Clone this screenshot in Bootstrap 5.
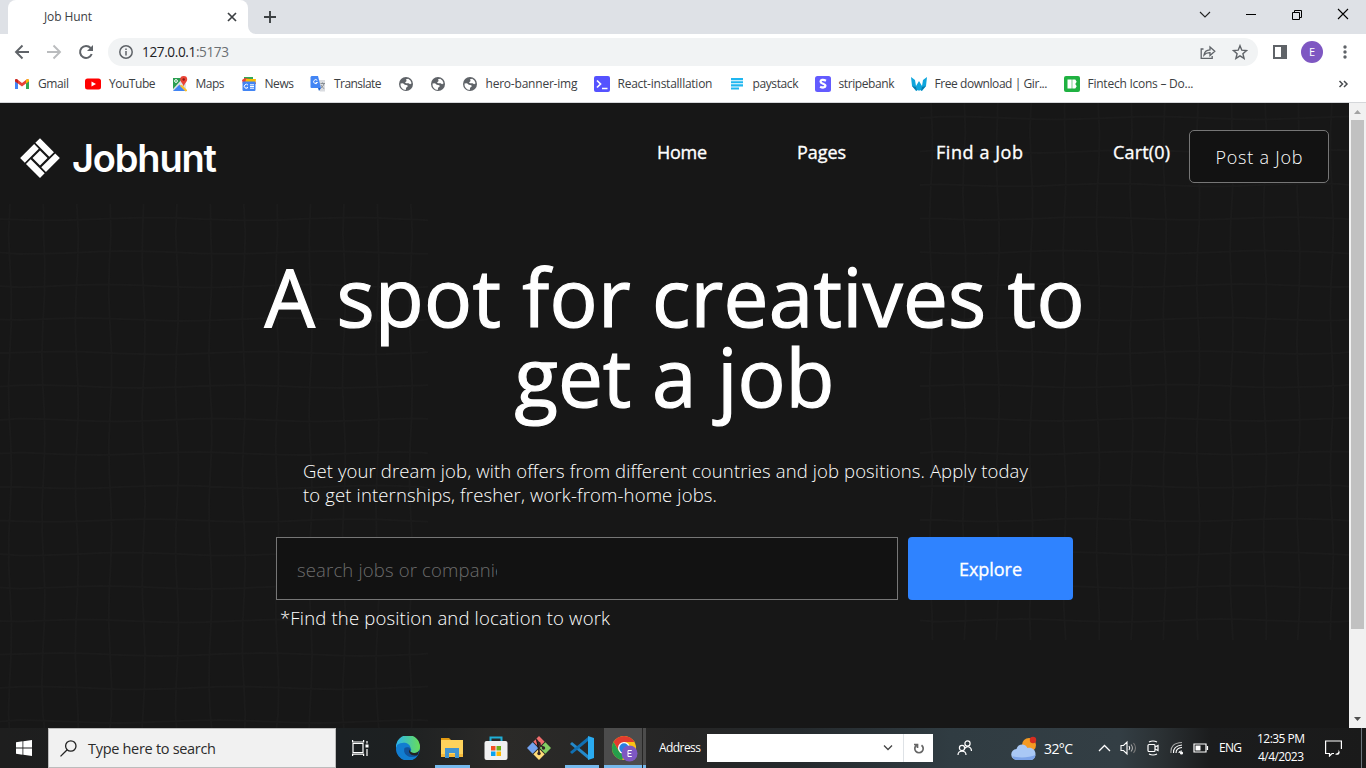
<!DOCTYPE html>
<html lang="en">
<head>
<meta charset="utf-8">
<title>Job Hunt</title>
<meta name="viewport" content="width=device-width, initial-scale=1">
<link href="https://cdn.jsdelivr.net/npm/bootstrap@5.3.0/dist/css/bootstrap.min.css" rel="stylesheet">
<style>
  html, body { height: 768px; overflow: hidden; }
  body { font-family: "Open Sans", "Noto Sans", sans-serif; font-size: 12px; color: #3c4043; }
  svg { display: block; flex: none; }
  [data-w] { display: inline-block; white-space: nowrap; flex: none; }

  .tabstrip { height: 34px; background: #dee1e6; }
  .tab-active { width: 248px; height: 34px; }
  .tab-face { margin-left: 8px; width: 240px; background: #fff; border-radius: 8px 8px 0 0; padding: 0 10px 0 36px; }
  .toolbar { height: 36px; background: #fff; }
  .omnibox { width: 1150px; height: 28px; border-radius: 14px; background: #f1f3f4; margin-left: 13px; padding: 0 10px 0 11px; font-size: 13.6px; color: #202124; }
  .bookmarks { height: 32px; gap: 16px; padding: 0 17px 5px 14px; background: #fff; }
  .bookmarks > span { display: flex; align-items: center; gap: 8px; }
  .avatar { width: 22px; height: 22px; background: #7e57c2; color: #fff; font-size: 11px; }

  .site { height: 626px; border-top: 1px solid #d5d7da; background: #171717; }
  .site-page { font-size: 18.5px; color: #fff; font-weight: 320; }
  .grid-art { fill: none; stroke: #1b1b1b; stroke-width: 2; }
  .site-header { height: 101px; padding: 27px 20px 0; }
  .logo-text { font: 560 38px/40px Inter, sans-serif; }
  .site-nav { gap: 90px; font-size: 18px; font-weight: 500; line-height: 24px; padding-top: 10px; margin-right: 19px; -webkit-text-stroke: .35px #fff; }
  .post-btn { width: 140px; height: 53px; border: 1px solid #767676; border-radius: 5px; background: #121212; font-size: 18px; padding-top: 1px; }
  .hero-title { font-size: 80px; line-height: 80px; font-weight: 400; margin: 52px 0 0; -webkit-text-stroke: 1.2px #fff; }
  .hero-copy { line-height: 24px; margin: 43px 0 0 303px; }
  .search-row { margin: 30px 0 0 276px; gap: 10px; }
  .search-box { width: 622px; height: 63px; background: #121212; border: 1px solid #767676; padding: 2px 0 0 20px; color: #6c6c6c; font-weight: 300; }
  .search-clip { width: 200px; overflow: hidden; }
  .explore-btn { width: 165px; height: 63px; padding-top: 1px; border-radius: 4px; background: #2f83ff; font-size: 18px; font-weight: 500; -webkit-text-stroke: .35px #fff; }
  .hint { margin: 6px 0 0 280px; line-height: 24px; }
  .scrollbar { width: 17px; background: #f1f1f1; }
  .scroll-thumb { width: 13px; height: 509px; background: #c1c1c1; }

  .taskbar { height: 40px; color: #fff; background: linear-gradient(90deg, #1e1e1e 0, #1c2022 340px, #1d2021 395px, #2b2a28 500px, #252525 690px, #252a2d 800px, #303c42 950px, #333e44 1120px, #2b3134 1160px, #1b1c1d 1210px, #1a1a1a 1366px); }
  .win-search { width: 288px; height: 40px; background: #f1f1f1; border: 1px solid #bcbcbc; color: #2b2b2b; font-size: 14.5px; padding-left: 11px; }
  .cell { display: flex; flex: none; align-items: center; justify-content: center; height: 40px; }
  .app-open { border-bottom: 3px solid #76b9ed; }
  .app-active { background: #4c4c4c; }
  .addr { width: 226px; height: 28px; background: #fff; }
  .clock { font-size: 12px; line-height: 18px; }
</style>
</head>
<body>
<svg width="0" height="0" class="position-absolute" aria-hidden="true">
  <symbol id="globe" viewBox="0 0 16 16"><circle cx="8" cy="8" r="7" fill="#5f6368"/><path d="M2.500 7.500 5 7.200l1.800 1.600 2.600.4.300 1.300-1.600 1.200-.3 2.400A5.800 5.800 0 0 1 2.500 7.500zM8 3.200l2.200-.4 2.200 1.800 1.200 2.600-1.500 1-1.500-1-2.400.1L7 6.500l1.600-1.400z" fill="#fff"/></symbol>
  <symbol id="chrome" viewBox="0 0 28 28"><circle cx="14" cy="14" r="13" fill="#fbc116"/><path d="M2.800 7.500A13 13 0 0 1 25.200 7.500H14L8.400 17.200z" fill="#e33b2e"/><path d="M2.800 7.500 8.400 17.200 14 20.500l-2 6.400A13 13 0 0 1 2.800 7.500z" fill="#269f4b"/><circle cx="14" cy="14" r="6.500" fill="#fff"/><circle cx="14" cy="14" r="5.100" fill="#2a7de1"/></symbol>
</svg>

<div class="d-flex flex-column">
  <!-- window tabs -->
  <div class="tabstrip d-flex align-items-center">
    <div class="tab-active d-flex">
      <div class="tab-face d-flex align-items-center justify-content-between">
        <span data-w="48">Job Hunt</span>
        <svg width="12" height="12" viewBox="0 0 12 12" stroke="#3c4043" stroke-width="1.700"><path d="m2 2 8 8M10 2l-8 8"/></svg>
      </div>
    </div>
    <svg class="align-self-end" width="8" height="8"><path d="M0 0A8 8 0 0 0 8 8H0z" fill="#fff"/></svg>
    <svg width="14" height="14" style="margin-left:7px" viewBox="0 0 14 14" stroke="#3c4043" stroke-width="1.900"><path d="M7 1v12M1 7h12"/></svg>
    <div class="ms-auto d-flex align-items-center pb-1" style="margin-right:6px">
      <svg width="46" height="14" viewBox="0 0 46 14" fill="none" stroke="#222" stroke-width="1.100"><path d="m13 4 5 5 5-5"/></svg>
      <svg width="46" height="14" viewBox="0 0 46 14" stroke="#000"><path d="M13 6.500h10"/></svg>
      <svg width="46" height="14" viewBox="0 0 46 14" fill="none" stroke="#000"><path d="M13.500 4.500h7v7h-7zM15.500 4.500v-2h7v7h-2"/></svg>
      <svg width="35" height="14" viewBox="0 0 35 14" stroke="#000" stroke-width="1.100"><path d="m13 1 10 10m0-10L13 11"/></svg>
    </div>
  </div>

  <!-- address bar -->
  <div class="toolbar d-flex align-items-center">
    <svg width="18" height="18" style="margin-left:13px" viewBox="0 0 18 18" fill="none" stroke="#5f6368" stroke-width="1.900"><path d="M16 9H3m6.500-6.500L3 9l6.500 6.500"/></svg>
    <svg width="18" height="18" style="margin-left:14px" viewBox="0 0 18 18" fill="none" stroke="#babcbe" stroke-width="1.900"><path d="M2 9h13M8.500 2.500 15 9l-6.500 6.500"/></svg>
    <svg width="18" height="18" style="margin-left:14px" viewBox="0 0 18 18" fill="none" stroke="#5f6368" stroke-width="2"><path d="M14.700 11A6 6 0 1 1 13.600 5"/><path d="M16 2v6h-6z" fill="#5f6368" stroke="none"/></svg>
    <div class="omnibox d-flex align-items-center">
      <svg width="14" height="14" viewBox="0 0 14 14" fill="none" stroke="#5f6368" stroke-width="1.500"><circle cx="7" cy="7" r="6.200"/><path d="M7 6v4.500M7 3.400v1.500"/></svg>
      <span style="margin-left:9px" data-w="87">127.0.0.1<span style="color:#6a6e72">:5173</span></span>
      <svg class="ms-auto" width="16" height="16" viewBox="0 0 16 16" fill="none" stroke="#5f6368" stroke-width="1.300"><path d="M3.500 5H1.200v9.300h11V12M4 11c.4-3.500 2.500-5 6-5.200V3l4.800 4.300L10 11.500V8.700C7.500 8.600 5.500 9.300 4 11z"/></svg>
      <svg style="margin-left:16px" width="16" height="16" viewBox="0 0 16 16" fill="none" stroke="#5f6368" stroke-width="1.400"><path d="m8 1.700 1.800 4.500 4.700.4-3.600 3.100 1.200 4.700L8 11.800l-4.100 2.600 1.200-4.700L1.500 6.600l4.700-.4z"/></svg>
    </div>
    <svg width="14" height="14" style="margin-left:15px" viewBox="0 0 14 14"><path d="M1 1h12v12H1z" fill="none" stroke="#5f6368" stroke-width="2"/><path d="M8 1h5v12H8z" fill="#5f6368"/></svg>
    <div class="avatar rounded-circle d-flex align-items-center justify-content-center" style="margin-left:14px">E</div>
    <svg width="4" height="14" style="margin-left:20px" fill="#5f6368"><circle cx="2" cy="2" r="1.700"/><circle cx="2" cy="7" r="1.700"/><circle cx="2" cy="12" r="1.700"/></svg>
  </div>

  <!-- bookmarks -->
  <div class="bookmarks d-flex align-items-center">
    <span><svg width="16" height="16" viewBox="0 0 16 16"><path d="M1 4v9h3V6.500z" fill="#4285f4"/><path d="M15 4v9h-3V6.500z" fill="#34a853"/><path d="M1 3.800 2.800 3 8 7l5.200-4 1.800.8v1.400L8 10.500 1 5.200z" fill="#ea4335"/><path d="M12 4v3.500l3-2.300V3.800L13.700 3z" fill="#fbbc04"/><path d="M1 3.500v1.700l3 2.300V4l-1.500-1z" fill="#c5221f"/></svg><b class="fw-normal" data-w="31">Gmail</b></span>
    <span><svg width="16" height="16"><rect y="2.500" width="16" height="11" rx="2.500" fill="#f00"/><path d="m6.500 5.500 4.500 2.500-4.500 2.500z" fill="#fff"/></svg><b class="fw-normal" data-w="46.500">YouTube</b></span>
    <span><svg width="16" height="16" viewBox="0 0 16 16"><path d="M1 2h13v13H1z" fill="#dfe3e6"/><path d="M1 2h10L1 13z" fill="#2b9e51"/><path d="m7.500 8.500 6.500 6.500H1z" fill="#4285f4"/><path d="m10 9 5 5v1l-1.500.5-6-6z" fill="#fbc02d"/><path d="M11.700 0a3.500 3.500 0 0 1 3.500 3.600c0 2.400-2.400 3.400-3.500 7-1.100-3.600-3.500-4.600-3.500-7A3.500 3.500 0 0 1 11.700 0z" fill="#ea4335"/><circle cx="11.700" cy="3.500" r="1.200" fill="#8e1a13"/><circle cx="4" cy="5" r="1.400" fill="none" stroke="#fff"/></svg><b class="fw-normal" data-w="29">Maps</b></span>
    <span><svg width="16" height="16" viewBox="0 0 16 16"><path d="M3 1h9v6H3z" fill="#34a853"/><path d="m1 4 3-2 10 2 1 4H2z" fill="#ea4335"/><path d="m5 3 10 0-1 5H4z" fill="#fbbc04"/><rect x="1.500" y="5.500" width="13" height="9.500" rx="1" fill="#4285f4"/><path d="M7 9.200a2 2 0 1 0 0 2.200H5.500M9 8.800h4m-4 1.700h4m-4 1.700h4" stroke="#fff" fill="none"/></svg><b class="fw-normal" data-w="29.500">News</b></span>
    <span><svg width="16" height="16" viewBox="0 0 16 16"><path d="M6 4h9v11.500h-5z" fill="#dadce0"/><path d="M1.500 0H8l3 12H1.500A1 1 0 0 1 .5 11V1z" fill="#4285f4"/><path d="m8 12 3 0-2 3z" fill="#1b5fcc"/><path d="M7.300 4.500a2 2 0 1 0 .2 2H5.700" stroke="#fff" fill="none"/><path d="M10.500 7.500H15m-2.500-1v1m1.500 0c-.5 2.500-2 3.500-3 4.500m0-3c1 2 2 3 3.200 3.500" stroke="#80868b" fill="none" stroke-width=".9"/></svg><b class="fw-normal" data-w="47.500">Translate</b></span>
    <span><svg width="16" height="16"><use href="#globe"/></svg></span>
    <span><svg width="16" height="16"><use href="#globe"/></svg></span>
    <span><svg width="16" height="16"><use href="#globe"/></svg><b class="fw-normal" data-w="92">hero-banner-img</b></span>
    <span><svg width="16" height="16"><rect width="16" height="16" rx="2" fill="#5552ff"/><path d="m3 4.500 3.500 3.500L3 11.500M8 12.500h5.500" fill="none" stroke="#fff" stroke-width="1.700"/></svg><b class="fw-normal" data-w="95">React-installlation</b></span>
    <span><svg width="16" height="16" fill="#1fb6f0"><path d="M2 2h12v2.200H2zM2 5.200h12v2.100H2zM2 8.300h12v2.100H2zM2 11.400h8v2.200H2z"/></svg><b class="fw-normal" data-w="46">paystack</b></span>
    <span><svg width="16" height="16"><rect width="16" height="16" rx="2.500" fill="#635bff"/><path d="M11 4.800C8 3.200 5.500 3.900 5.600 5.700c.1 2.300 5 1.900 4.800 4.200-.1 1.900-3 2-5.300.8" fill="none" stroke="#fff" stroke-width="2.300"/></svg><b class="fw-normal" data-w="56">stripebank</b></span>
    <span><svg width="16" height="16"><path d="m0 1 4 3 1 6 3-5 3 5 1-6 4-3-1 9-4 5-2-1-1 1-1-1-2 1-4-5z" fill="#0ea5dc"/><path d="m1 10 4 1 1 4zM15 10l-4 1-1 4z" fill="#0878a8"/></svg><b class="fw-normal" data-w="113">Free download | Gir...</b></span>
    <span><svg width="16" height="16"><rect width="16" height="16" rx="2" fill="#1fb141"/><path d="M3.500 3.500h4.200v9H3.500zM8.300 3.500h3l1.400 2.200L11.300 8l1.400 2.300-1.400 2.200h-3z" fill="#fff"/></svg><b class="fw-normal" data-w="106">Fintech Icons – Do...</b></span>
    <svg class="ms-auto" width="11" height="10" fill="none" stroke="#4a4d51" stroke-width="1.500"><path d="m1.500 2 3 3-3 3M6 2l3 3-3 3"/></svg>
  </div>

  <!-- job site -->
  <div class="site d-flex">
    <main class="site-page flex-grow-1 position-relative overflow-hidden">
      <svg class="grid-art position-absolute top-0 start-0" width="1349" height="625"><path id="gridLines"/></svg>
      <div class="position-relative">
        <header class="site-header d-flex align-items-start">
          <svg width="40" height="40" viewBox="0 0 40 40" style="margin-top:8px" fill="#fff"><g transform="rotate(45 20 20)"><path d="M6 6h19.700v6.600H6zM27.500 6h6.600v19.700h-6.600zM14.300 27.500h19.800v6.600H14.300zM6 14.300h6.600v19.800H6zM14.700 14.700h10.600v10.600H14.700z"/></g></svg>
          <span class="logo-text" style="margin:8px 0 0 12px" data-w="145">Jobhunt</span>
          <nav class="site-nav d-flex ms-auto"><span data-w="50">Home</span><span data-w="49">Pages</span><span data-w="87">Find a Job</span><span data-w="57">Cart(0)</span></nav>
          <div class="post-btn d-flex align-items-center justify-content-center"><span data-w="87">Post a Job</span></div>
        </header>
        <h1 class="hero-title d-flex flex-column align-items-center"><span data-w="820">A spot for creatives to</span><span data-w="320">get a job</span></h1>
        <p class="hero-copy d-flex flex-column align-items-start"><span data-w="725">Get your dream job, with offers from different countries and job positions. Apply today</span><span data-w="414">to get internships, fresher, work-from-home jobs.</span></p>
        <div class="search-row d-flex">
          <div class="search-box d-flex align-items-center"><div class="search-clip"><span data-w="217">search jobs or companies</span></div></div>
          <div class="explore-btn d-flex align-items-center justify-content-center"><span data-w="63">Explore</span></div>
        </div>
        <p class="hint"><span data-w="330">*Find the position and location to work</span></p>
      </div>
    </main>
    <div class="scrollbar d-flex flex-column align-items-center">
      <svg width="17" height="17"><path d="m5 11 3.500-4 3.500 4z" fill="#a3a3a3"/></svg>
      <div class="scroll-thumb"></div>
      <svg class="mt-auto" width="17" height="17"><path d="m5 6 3.500 4L12 6z" fill="#505050"/></svg>
    </div>
  </div>

  <!-- taskbar -->
  <div class="taskbar d-flex align-items-center">
    <div class="cell" style="width:48px"><svg width="16" height="16" fill="#fff"><path d="M0 2.300 6.500 1.300v6.200H0zM7.300 1.200 16 0v7.500H7.300zM0 8.400h6.500v6.300L0 13.800zM7.300 8.400H16V16l-8.700-1.200z"/></svg></div>
    <div class="win-search d-flex align-items-center"><svg width="17" height="17" viewBox="0 0 17 17" fill="none" stroke="#222" stroke-width="1.300"><circle cx="10.800" cy="6" r="5.200"/><path d="M7.200 9.800.5 16.400"/></svg><span style="margin:1px 0 0 11px" data-w="128">Type here to search</span></div>
    <div class="cell" style="width:48px"><svg width="17" height="16" fill="none" stroke="#fff" stroke-width="1.200"><path d="M1 3.500h10v9H1zM.6 0v2h11V0M.6 16v-1.800h11V16M15 1v2.500M15 9v7"/><path d="M13.500 4.500h3v3h-3z" fill="#fff" stroke="none"/></svg></div>
    <div class="cell" style="width:48px"><svg width="24" height="24" viewBox="0 0 24 24"><defs><linearGradient id="eg" x2="1"><stop stop-color="#2bb4ef"/><stop offset="1" stop-color="#68dd58"/></linearGradient></defs><circle cx="12" cy="12" r="12" fill="#0b63b6"/><path d="M0 11A12 12 0 0 1 24 11c0 5-4 7-9 6-2-1 1-2 0-4C13 7 4 6 0 12z" fill="url(#eg)"/><path d="M1 9c6-4 13-2 13.500 3-4-2-7 2-5 5.500 3 5 9 3.500 13 1A12 12 0 0 1 0 13z" fill="#127dd0"/><path d="M8.500 12c-2 6 4 11 12.500 8l2-3c-3 2-9 1.500-9-2-1.500-.5-.5-2 0-3-2-1-4-1-5.500 0z" fill="#12549c"/><path d="M14 12c-1.500 1.800.2 4.500 4 5 2.500.2 4-1 5.500-3l-2 5c-5 2-11-2-7.500-7z" fill="#222"/></svg></div>
    <div class="cell app-open" style="width:35px;margin-left:3px"><svg width="22" height="22" viewBox="0 0 22 22" style="margin:3px 2px 0 0"><path d="M0 1h8l2 2H0z" fill="#e39b12"/><path d="M0 3h22v17H0z" fill="#ffd35c"/><path d="M0 17h22v3H0z" fill="#f5b93b"/><path d="M4 11h14v10h-4v-5H8v5H4z" fill="#4294d0"/></svg></div>
    <div class="cell" style="width:44px;margin-left:4px"><svg width="24" height="25" viewBox="0 0 24 25"><path d="M6.500 6V1.500h11V6" fill="none" stroke="#1faed5" stroke-width="2"/><rect x=".5" y="5" width="23" height="19" rx="2" fill="#f1f1f1"/><path d="M7 10h4.500v4.500H7z" fill="#f25022"/><path d="M12.500 10H17v4.500h-4.500z" fill="#6fb116"/><path d="M7 15.500h4.500V20H7z" fill="#0aa3ee"/><path d="M12.500 15.500H17V20h-4.500z" fill="#ffb900"/></svg></div>
    <div class="cell" style="width:42px"><svg width="24" height="24" viewBox="0 0 24 24"><g transform="rotate(45 12 12)"><path d="M3.500 3.500h8v8h-8z" fill="#f06d6d"/><path d="M12.500 3.500h8v8h-8z" fill="#83cf63"/><path d="M3.500 12.500h8v8h-8z" fill="#73a2ee"/><path d="M12.500 12.500h8v8h-8z" fill="#ffdc78"/></g><path d="m9 3 3 4v11M12 8l5 4" stroke="#302525" stroke-width="1.500"/><g fill="#302525"><circle cx="12" cy="7.500" r="1.700"/><circle cx="12" cy="17.500" r="1.700"/><circle cx="16.500" cy="12" r="1.700"/></g></svg></div>
    <div class="cell app-open" style="width:34px;margin-left:5px"><svg width="24" height="24" viewBox="0 0 24 24" style="margin-top:3px"><path d="m0 8 2-2 16 13v4z" fill="#2489ca"/><path d="m0 16 2 2L18 5V1z" fill="#1070b3"/><path d="m18 0 6 2v20l-6 2z" fill="#2aabf0"/></svg></div>
    <div class="cell app-open app-active" style="width:38px;margin-left:5px"><div class="position-relative" style="margin:3px 0 0 2px"><svg width="26" height="26"><use href="#chrome"/></svg><svg class="position-absolute" style="left:10px;top:10px" width="17" height="17"><circle cx="8.500" cy="8.500" r="8" fill="#7e57c2"/><path d="M10.800 5.500H7v6h3.800M7 8.500h3.300" stroke="#fff" fill="none"/></svg></div></div>
    <div class="cell app-open" style="width:3px;margin-left:1px;background:#4c4c4c"></div>
    <span style="margin-left:13px" data-w="42">Address</span>
    <div class="addr d-flex align-items-center" style="margin-left:6px"><svg class="ms-auto" width="10" height="8" fill="none" stroke="#444" stroke-width="1.300"><path d="m1 1.500 4 4 4-4"/></svg><div class="border-start h-100 d-flex align-items-center justify-content-center" style="width:30px;margin-left:10px"><svg width="12" height="13" fill="none" stroke="#666" stroke-width="1.700"><path d="M8.500 3.200a4.200 4.200 0 1 1-5 0M1 2.500h3.500V6"/></svg></div></div>
    <svg style="margin-left:24px" width="16" height="17" fill="none" stroke="#fff" stroke-width="1.200"><circle cx="5" cy="8" r="2.600"/><path d="M1 15c0-5 8-5 8 0"/><circle cx="10.500" cy="3.500" r="2.600"/><path d="M7.500 8.500c3-3.500 7-1.500 7 2.500"/></svg>
    <svg style="margin-left:38px" width="27" height="25" viewBox="0 0 27 25"><circle cx="18" cy="9" r="7" fill="#f59a23"/><circle cx="22" cy="4" r="3.200" fill="#d62d20"/><path d="M6 24a5.500 5.500 0 0 1-.5-11C7 7.500 14 7 16.500 12c4-1 8 1.500 8 6 0 3.500-2 6-5 6z" fill="#a9c8f5"/><path d="M1.500 20c4 2 17 2 23-1-.5 3-2 5-5 5H6c-2.500 0-4-1.500-4.500-4z" fill="#7da4e8"/></svg>
    <span style="margin-left:6px;font-size:14px" data-w="29">32°C</span>
    <svg style="margin-left:25px" width="13" height="8" fill="none" stroke="#fff" stroke-width="1.300"><path d="m1 7 5.500-5.500L12 7"/></svg>
    <svg style="margin-left:9px" width="17" height="16" fill="none" stroke="#fff" stroke-width="1.100"><path d="M1 5.500h2.500L7 2v12l-3.500-3.500H1zM9 6q1.500 2 0 4"/><path d="M11 4.500q3 3.500 0 7" stroke="#aaa"/><path d="M13.500 3q4 5 0 10" stroke="#777"/></svg>
    <svg style="margin-left:9px" width="14" height="16" fill="none" stroke="#fff" stroke-width="1.200"><rect x="2" y="4.500" width="7" height="7" rx="1"/><path d="m9 7 3-1.500v5L9 9M3 2q4-2 8 0M3 14q4 2 8 0"/></svg>
    <svg style="margin-left:10px" width="15" height="14" fill="none" stroke="#fff" stroke-width="1.100"><path d="M9 12q0-2 3-2M6 12q0-5 6-5.500M3.500 12Q3 5 12 4" /><path d="M1 12Q0 2 12 1.500" stroke="#aaa"/><circle cx="11.500" cy="12" r="1" fill="#fff"/></svg>
    <svg style="margin-left:8px" width="16" height="10" fill="none" stroke="#fff" stroke-width="1.200"><path d="M1 1h12v8H1zM14.500 3v4"/><path d="M2.500 2.500h5v5h-5z" fill="#fff" stroke="none"/></svg>
    <span style="margin-left:10px" data-w="23">ENG</span>
    <div class="clock d-flex flex-column align-items-center" style="margin-left:15px"><span data-w="48">12:35 PM</span><span data-w="46">4/4/2023</span></div>
    <svg style="margin-left:20px" width="17" height="17" fill="none" stroke="#fff" stroke-width="1.200"><path d="M9 13.500H7l-2.500 2.500v-2.500H.6V1h15.800v8"/><path d="M13 9.500c1.500 2 0 4-3 4.500 3 2.500 7-1 3-4.500z" fill="#fff" stroke="none"/></svg>
    <div class="ms-auto h-100 border-start border-secondary" style="width:5px"></div>
  </div>
</div>
<script src="https://cdn.jsdelivr.net/npm/bootstrap@5.3.0/dist/js/bootstrap.bundle.min.js"></script>
<script>
  // Track each label out (or in) to its set width.
  document.querySelectorAll('[data-w]').forEach(el => {
    const r = document.createRange(); r.selectNodeContents(el);
    const w = +el.dataset.w, n = el.textContent.length;
    el.style.letterSpacing = ((w - r.getBoundingClientRect().width) / (n - 1)).toFixed(3) + 'px';
    el.style.width = w + 'px';
  });
  // Hand-drawn looking mesh: two panels of gently waving lines.
  const mesh = (x0, y0, x1, y1, fx, fy) => {
    let d = '';
    for (let x = fx, i = 0; x < x1; x += 33.4, i++) {
      d += `M${x} ${y0}`;
      for (let y = y0 + 30; y < y1 + 30; y += 30) d += `L${(x + 1.5 * Math.sin(y / 26 + i * 1.3)).toFixed(1)} ${Math.min(y, y1)}`;
    }
    for (let y = fy, i = 0; y < y1; y += 33.5, i++) {
      d += `M${x0} ${y}`;
      for (let x = x0 + 20; x < x1 + 20; x += 20) d += `L${Math.min(x, x1)} ${(y + 1.4 * Math.sin(x / 32 + i * .7)).toFixed(1)}`;
    }
    return d;
  };
  document.getElementById('gridLines').setAttribute('d', mesh(0, 101, 428, 625, 10, 116) + mesh(920, 0, 1349, 537, 931, 15));
</script>
</body>
</html>
